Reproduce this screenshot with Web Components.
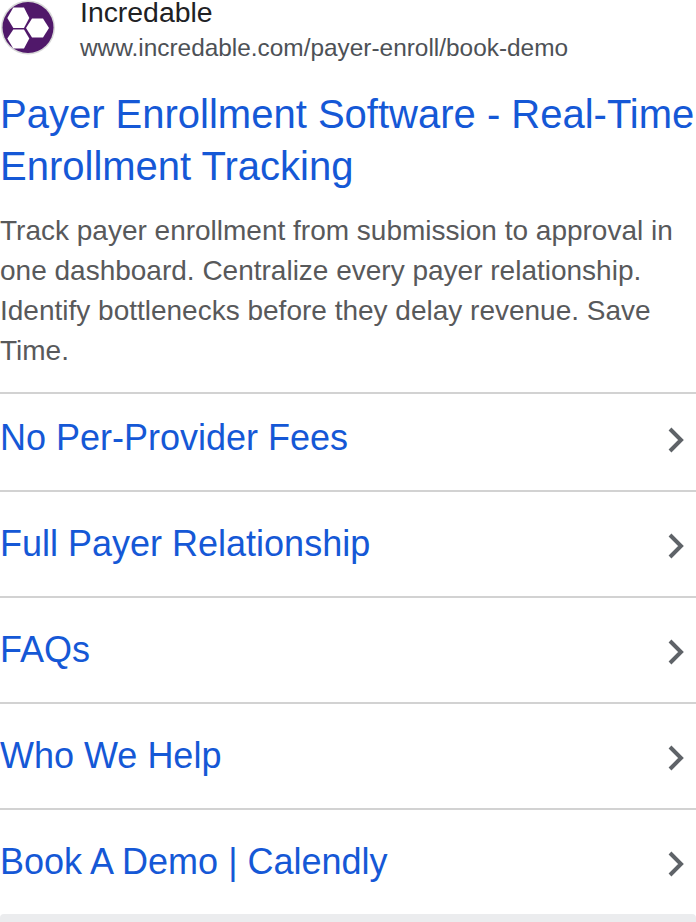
<!DOCTYPE html>
<html>
<head>
<meta charset="utf-8">
<title>Incredable ad</title>
<style>
    html, body { margin: 0; background: #fff; }
    body { font-family: "Liberation Sans", Arial, sans-serif; height: 922px; overflow: hidden; }
</style>
</head>
<body>
<ad-card>
    <ad-header name="Incredable" url="www.incredable.com/payer-enroll/book-demo"></ad-header>
    <ad-title>Payer Enrollment Software - Real-Time Enrollment Tracking</ad-title>
    <ad-desc>Track payer enrollment from submission to approval in one dashboard. Centralize every payer relationship. Identify bottlenecks before they delay revenue. Save Time.</ad-desc>
    <ad-link first>No Per-Provider Fees</ad-link>
    <ad-link>Full Payer Relationship</ad-link>
    <ad-link>FAQs</ad-link>
    <ad-link>Who We Help</ad-link>
    <ad-link>Book A Demo | Calendly</ad-link>
</ad-card>

<script>
class AdCard extends HTMLElement {
    constructor() {
        super();
        this.attachShadow({ mode: 'open' });
        this.shadowRoot.innerHTML = `
            <style>
                :host { display: flex; flex-direction: column; height: 922px; }
                .bottom { flex: none; height: 8px; background: #ebecee; border-radius: 4px 4px 0 0; }
            </style>
            <slot></slot>
            <div class="bottom"></div>
        `;
    }
}

class AdHeader extends HTMLElement {
    constructor() {
        super();
        this.attachShadow({ mode: 'open' });
    }

    connectedCallback() {
        this.shadowRoot.innerHTML = `
            <style>
                :host { display: flex; flex: none; gap: 24px; height: 88px; color: #202124; }
                svg { flex: none; width: 56px; height: 56px; }
                .name { font-size: 28.4px; line-height: 24px; }
                .url { font-size: 24.4px; line-height: 26px; margin-top: 11px; color: #4d5156; }
            </style>
            <svg viewBox="0 0 56 56">
                <circle cx="28" cy="27.5" r="27" fill="#d8d8d8"/>
                <circle cx="28" cy="27.5" r="25.5" fill="#50186a"/>
                <polygon points="7.3,18 13.3,7.5 24,7.5 29.3,18 24,28 13.3,28" fill="#fff"/>
                <polygon points="26,28 32,18.5 43,18.5 49,28 43,37.5 32,37.5" fill="#fff"/>
                <polygon points="7.3,38.5 13.3,29.5 24,29.5 29.3,38.5 24,48.5 13.3,48.5" fill="#fff"/>
            </svg>
            <div>
                <div class="name">${this.getAttribute('name')}</div>
                <div class="url">${this.getAttribute('url')}</div>
            </div>
        `;
    }
}

class AdTitle extends HTMLElement {
    constructor() {
        super();
        this.attachShadow({ mode: 'open' });
        this.shadowRoot.innerHTML = `
            <style>
                :host { display: block; flex: none; font-size: 40px; line-height: 52px; color: #1558d6; }
            </style>
            <slot></slot>
        `;
    }
}

class AdDesc extends HTMLElement {
    constructor() {
        super();
        this.attachShadow({ mode: 'open' });
        this.shadowRoot.innerHTML = `
            <style>
                :host { display: block; flex: none; font-size: 28px; line-height: 40px; color: #58595b; margin-top: 19px; height: 181px; }
            </style>
            <slot></slot>
        `;
    }
}

class AdLink extends HTMLElement {
    constructor() {
        super();
        this.attachShadow({ mode: 'open' });
        this.shadowRoot.innerHTML = `
            <style>
                :host { display: flex; flex: none; align-items: center; justify-content: space-between; box-sizing: border-box; height: 106px; border-top: 2px solid #d2d2d2; font-size: 36px; color: #1558d6; }
                :host([first]) { height: 98px; padding-bottom: 9px; }
                svg { width: 20px; height: 28px; margin: 4px 10px 0 0; }
                :host([first]) svg { margin-top: 5px; }
            </style>
            <slot></slot>
            <svg viewBox="0 0 20 28"><path d="M4 3 L15 14 L4 25" fill="none" stroke="#5f6368" stroke-width="4"/></svg>
        `;
    }
}

customElements.define('ad-card', AdCard);
customElements.define('ad-header', AdHeader);
customElements.define('ad-title', AdTitle);
customElements.define('ad-desc', AdDesc);
customElements.define('ad-link', AdLink);
</script>
</body>
</html>
